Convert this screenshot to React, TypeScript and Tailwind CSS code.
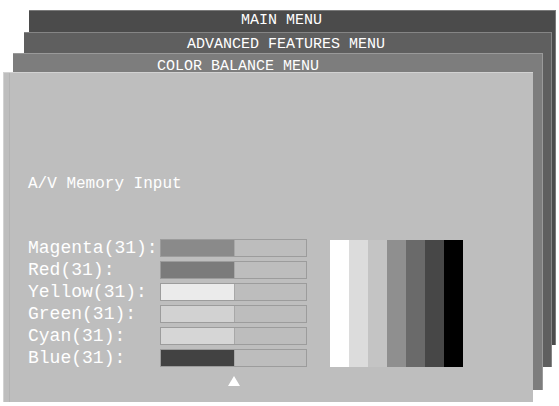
import React from "react";

interface ColorRow {
  name: string;
  value: number;
  fill: string;
}

const rows: ColorRow[] = [
  { name: "Magenta", value: 31, fill: "bg-[#8a8a8a]" },
  { name: "Red", value: 31, fill: "bg-[#7b7b7b]" },
  { name: "Yellow", value: 31, fill: "bg-[#ebebeb]" },
  { name: "Green", value: 31, fill: "bg-[#d2d2d2]" },
  { name: "Cyan", value: 31, fill: "bg-[#d6d6d6]" },
  { name: "Blue", value: 31, fill: "bg-[#424242]" },
];

const stripes = [
  "bg-[#ffffff]",
  "bg-[#dcdcdc]",
  "bg-[#c4c4c4]",
  "bg-[#8f8f8f]",
  "bg-[#6a6a6a]",
  "bg-[#474747]",
  "bg-[#000000]",
];

const mono = "font-['Liberation_Mono','Courier_New',monospace]";

const App: React.FC = () => {
  return (
    <div className="relative w-[559px] h-[406px] bg-white overflow-hidden">
      {/* main menu window (back) */}
      <div className="absolute left-[29px] top-[10px] w-[527px] h-[335px] bg-[#4b4b4b] border-t border-r border-[#7a7a7a]">
        <div className={`${mono} pl-[212px] pt-[1px] text-[15px] leading-[17px] text-white`}>
          MAIN MENU
        </div>
      </div>

      {/* advanced features window */}
      <div className="absolute left-[24px] top-[32px] w-[528px] h-[335px] bg-[#5f5f5f] border-t border-r border-[#858585]">
        <div className={`${mono} pl-[163px] pt-[3px] text-[15px] leading-[17px] text-white`}>
          ADVANCED FEATURES MENU
        </div>
      </div>

      {/* color balance window */}
      <div className="absolute left-[13px] top-[53px] w-[530px] h-[337px] bg-[#7d7d7d] border-t border-r border-[#9a9a9a]">
        <div className={`${mono} pl-[144px] pt-[4px] text-[15px] leading-[17px] text-white`}>
          COLOR BALANCE MENU
        </div>
      </div>

      {/* front panel */}
      <div className="absolute left-[3px] top-[72px] w-[530px] h-[330px] bg-[#bebebe] border-t border-l border-[#d2d2d2]">
        <div className="h-full border-l border-[#b3b3b3] ml-[5px] pl-[18px] pt-[102px]">
          <div className={`${mono} text-[16px] leading-[18px] text-white`}>
            A/V Memory Input
          </div>

          <div className="flex mt-[44px]">
            <div className="flex flex-col">
              {rows.map((row) => (
                <div key={row.name} className="flex items-center h-[22px]">
                  <div
                    className={`${mono} w-[132px] text-[18px] leading-[20px] text-white whitespace-nowrap`}
                  >
                    {row.name}({row.value}):
                  </div>
                  <div className="flex w-[147px] h-[18px] border border-[#9c9c9c]">
                    <div className={`w-[73px] h-full ${row.fill}`}></div>
                    <div className="flex-1 h-full bg-[#bdbdbd] border-l border-[#a8a8a8]"></div>
                  </div>
                </div>
              ))}
              <div className="flex pl-[200px] pt-[7px]">
                <svg width="12" height="10" viewBox="0 0 12 10">
                  <polygon points="6,0 12,10 0,10" fill="#ffffff" />
                </svg>
              </div>
            </div>

            <div className="flex ml-[23px] mt-[3px] h-[127px]">
              {stripes.map((s) => (
                <div key={s} className={`w-[19px] h-full ${s}`}></div>
              ))}
            </div>
          </div>
        </div>
      </div>
    </div>
  );
};

export default App;
